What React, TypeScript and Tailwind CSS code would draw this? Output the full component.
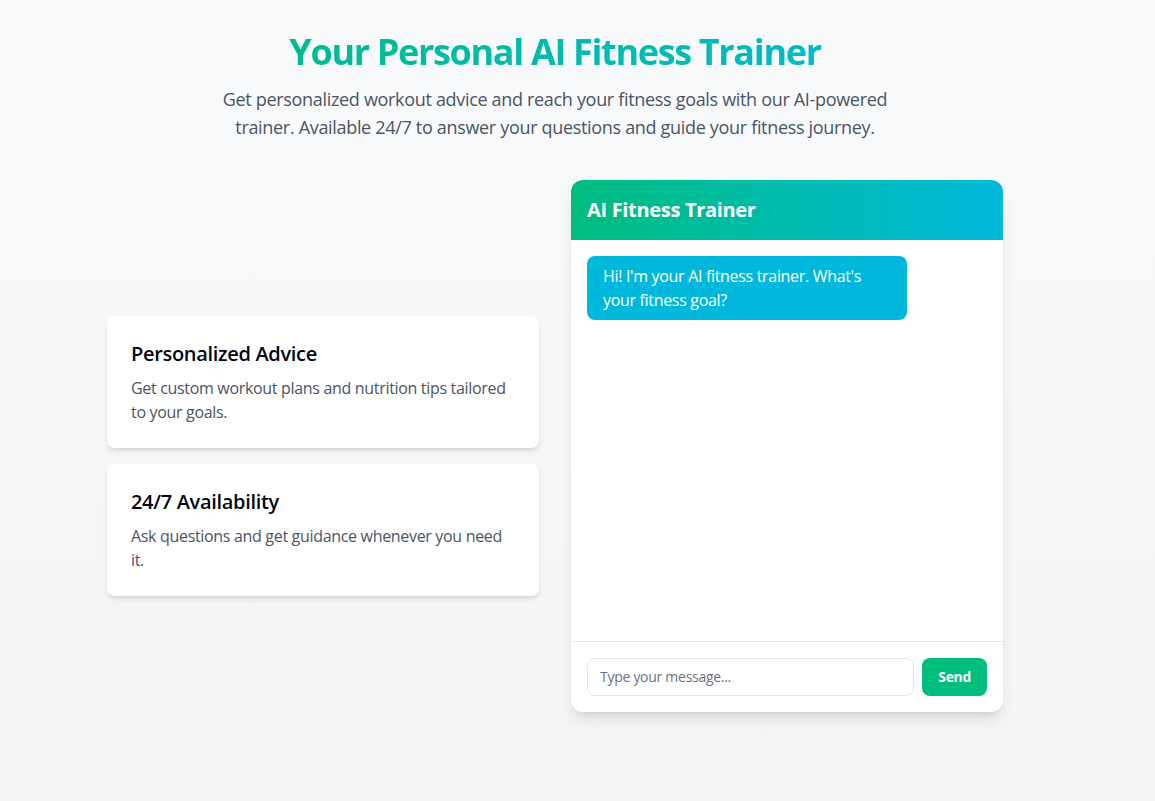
const features = [
	{
		title: "Personalized Advice",
		text: "Get custom workout plans and nutrition tips tailored to your goals."
	},
	{
		title: "24/7 Availability",
		text: "Ask questions and get guidance whenever you need it."
	},
]

const App = () => {
	return (
		<div className="min-h-[801px] bg-gradient-to-b from-gray-50 to-gray-100 font-['Open_Sans',sans-serif] tracking-[-0.02em]">
			<div className="w-[1110px] pt-8 pb-16">
				<div className="mx-auto w-[896px]">
					<div className="text-center">
						<h1 className="text-4xl font-bold leading-10 tracking-[-0.037em] bg-gradient-to-r from-emerald-500 to-cyan-500 bg-clip-text text-transparent">
							Your Personal AI Fitness Trainer
						</h1>
						<p className="mt-[13px] mx-auto w-[672px] text-lg leading-7 text-gray-600">
							Get personalized workout advice and reach your fitness goals with our AI-powered trainer. Available 24/7 to answer your questions and guide your fitness journey.
						</p>
					</div>

					<div className="mt-[39px] grid grid-cols-2 gap-8">
						<div className="flex flex-col justify-center gap-4 pt-5">
							{features.map((item, index) => (
								<div key={index} className="bg-white rounded-lg shadow-md p-6">
									<h3 className="text-xl leading-7 font-semibold text-gray-950 mb-2">{item.title}</h3>
									<p className="text-base leading-6 text-gray-600">{item.text}</p>
								</div>
							))}
						</div>

						<div className="h-[532px] flex flex-col bg-white rounded-xl shadow-lg overflow-hidden">
							<div className="bg-gradient-to-r from-emerald-500 to-cyan-500 p-4">
								<h2 className="text-xl leading-7 font-bold text-white">AI Fitness Trainer</h2>
							</div>
							<div className="flex-1 p-4">
								<div className="max-w-xs bg-cyan-500 text-white rounded-lg px-4 py-2 text-base leading-6">
									Hi! I'm your AI fitness trainer. What's your fitness goal?
								</div>
							</div>
							<div className="border-t border-gray-200 p-4 flex gap-2">
								<input
									type="text"
									placeholder="Type your message..."
									className="flex-1 min-w-0 border border-gray-200 rounded-lg px-3 py-2 text-sm leading-5 tracking-[-0.02em] placeholder:text-gray-500 outline-none"
								/>
								<button className="bg-emerald-500 text-white font-bold text-sm leading-5 rounded-lg px-4 py-2">
									Send
								</button>
							</div>
						</div>
					</div>
				</div>
			</div>
		</div>
	)
}

export default App;
